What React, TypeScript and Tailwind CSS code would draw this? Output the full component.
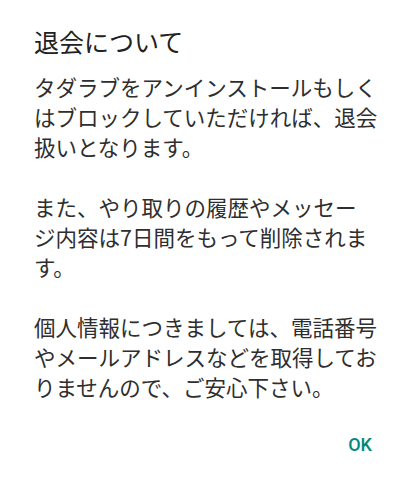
export default function App() {
  // lines broken as in the screenshot
  const paragraphs = [
    ['タダラブをアンインストールもしく', 'はブロックしていただければ、退会', '扱いとなります。'],
    ['また、やり取りの履歴やメッセー', 'ジ内容は7日間をもって削除されま', 'す。'],
    ['個人情報につきましては、電話番号', 'やメールアドレスなどを取得してお', 'りませんので、ご安心下さい。'],
  ];

  return (
    <div className="w-[420px] h-[479px] bg-white flex flex-col font-['Noto_Sans_CJK_JP',sans-serif]">
      <div className="px-[34px] pt-[24px]">
        <h2 className="text-[25px] leading-[34px] text-[#212121]">退会について</h2>
        <div className="mt-[14px] flex flex-col gap-[30px] text-[21.5px] leading-[30px] text-[#2e2e2e] whitespace-nowrap">
          {paragraphs.map((lines, i) => (
            <p key={i}>
              {lines.map((l, j) => (
                <span key={j} className="block">
                  {l}
                </span>
              ))}
            </p>
          ))}
        </div>
      </div>
      <div className="flex justify-end pr-[40px] mt-[24px]">
        <button className="px-[8px] h-[36px] font-['Roboto',sans-serif] font-medium text-[18px] text-[#00897b]">
          OK
        </button>
      </div>
    </div>
  );
}
